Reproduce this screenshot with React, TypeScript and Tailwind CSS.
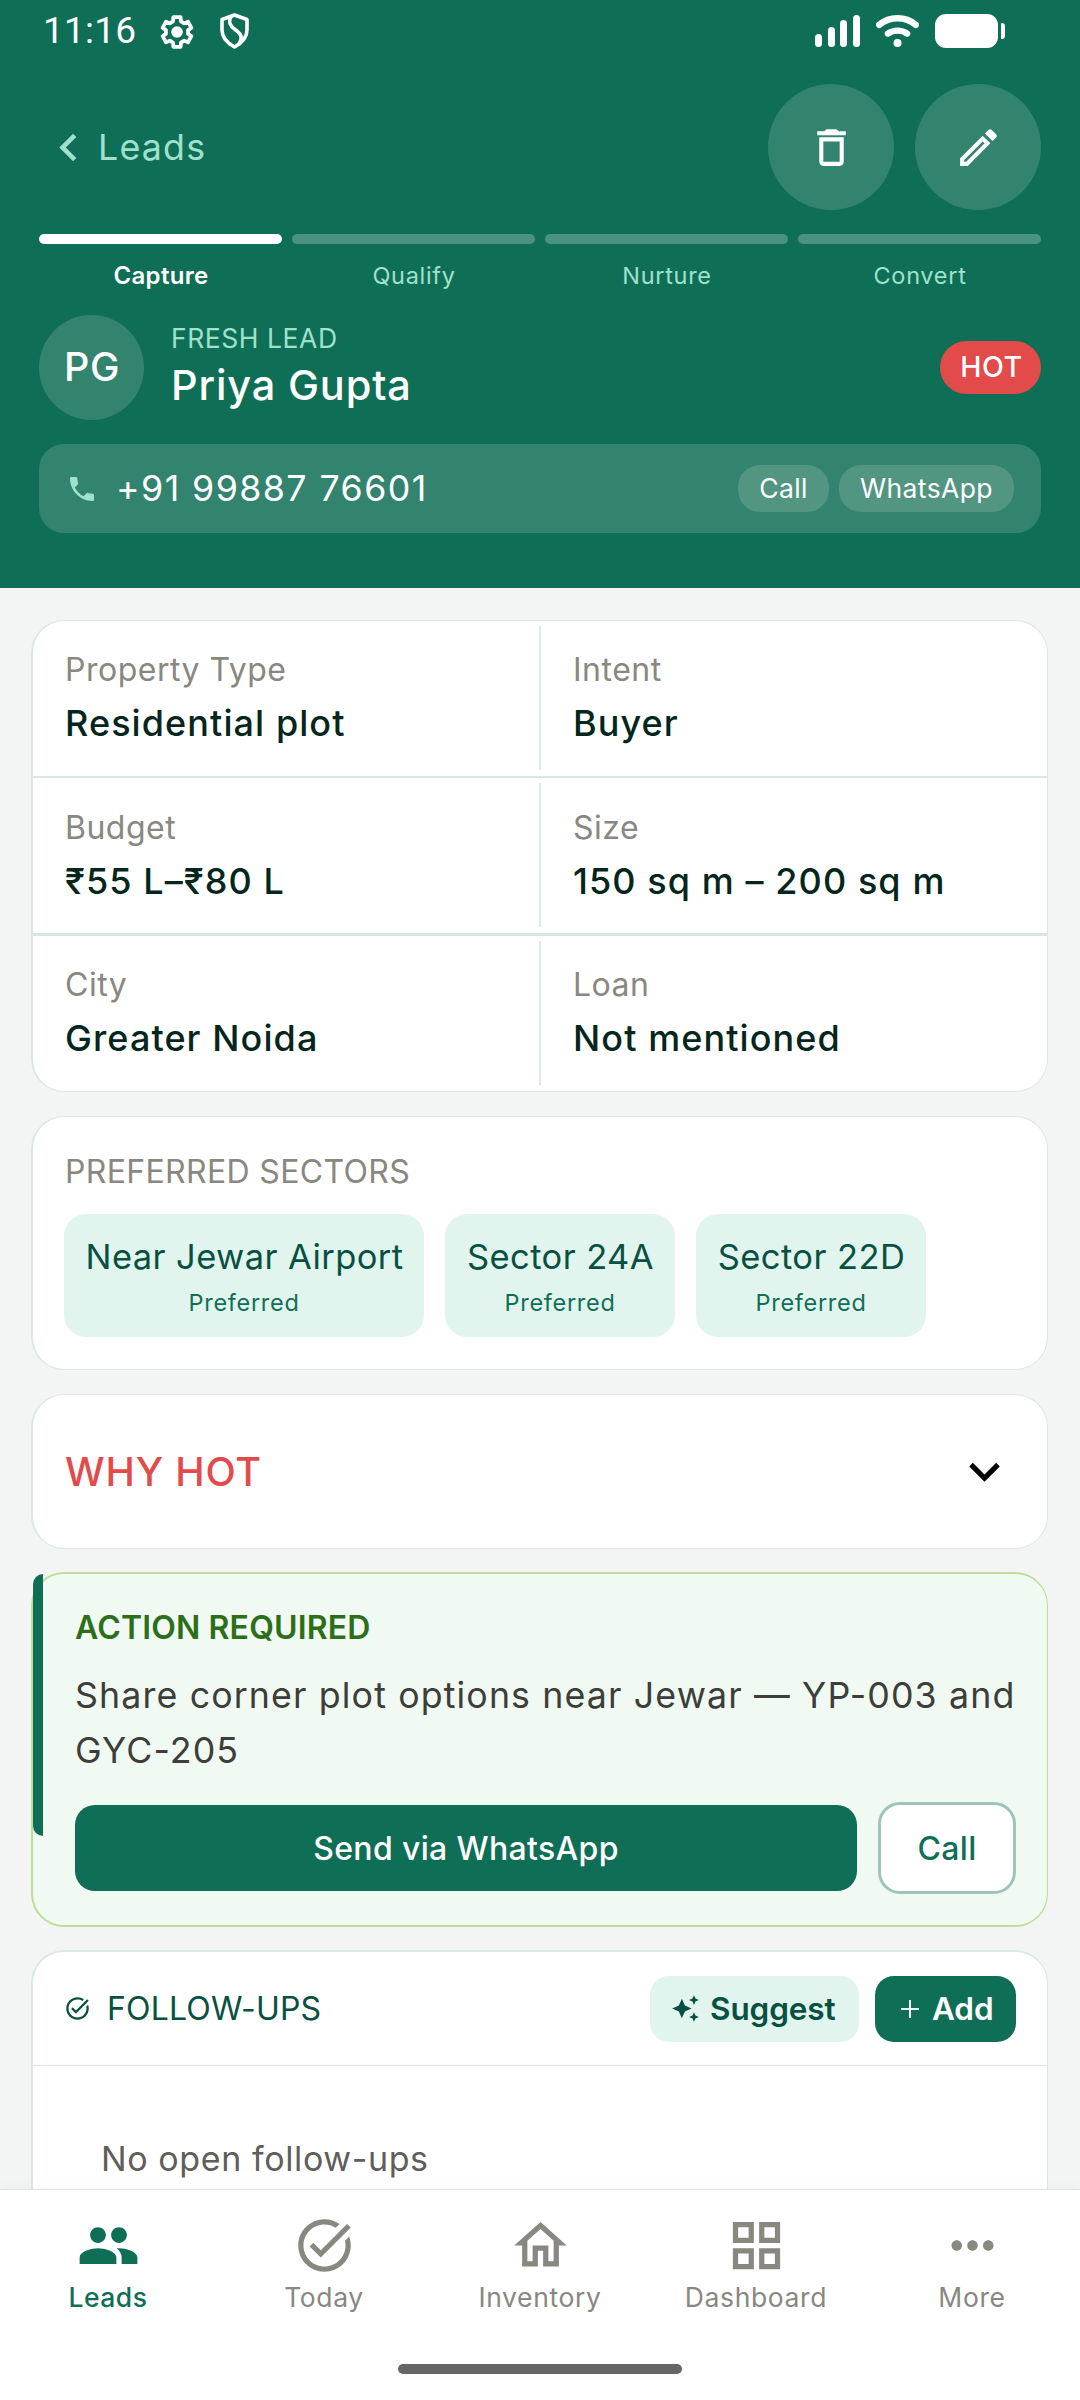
import type { ReactNode } from "react";
import {
  MdAutoAwesome,
  MdChevronLeft,
  MdDeleteOutline,
  MdExpandMore,
  MdMoreHoriz,
  MdOutlineEdit,
  MdOutlineGridView,
  MdOutlineHome,
  MdPeople,
  MdPhone,
  MdTaskAlt,
} from "react-icons/md";

function StatusBar() {
  return (
    <div className="flex h-[62px] items-center justify-between pl-[43px] pr-[75px] text-white">
      <div className="flex items-center">
        <span className="-mt-[1px] w-[117px] font-['Roboto'] text-[37px] leading-none tracking-[0.2px]">11:16</span>
        <svg className="mt-[1px] h-[34px] w-[34px]" viewBox="-17 -17 34 34" fill="none">
          <path
            d="M-3.6-14.8 3.6-14.8 4-10.6 7.2-8.6 11-10.4 14.4-4.2 11.1-1.9 11.1 1.9 14.4 4.2 11 10.4 7.2 8.6 4 10.6 3.6 14.8-3.6 14.8-4 10.6-7.2 8.6-11 10.4-14.4 4.2-11.1 1.9-11.1-1.9-14.4-4.2-11-10.4-7.2-8.6-4-10.6Z"
            stroke="currentColor"
            strokeWidth="3.8"
            strokeLinejoin="round"
          />
          <circle r="5.8" fill="currentColor" />
        </svg>
        <svg className="ml-[26px] h-[36px] w-[29px]" viewBox="0 0 29 36" fill="none" stroke="currentColor" strokeWidth="3.600" strokeLinejoin="round">
          <path d="M14.5 2 27 6.5V17C27 25 21 30.500 14.500 34 8 30.500 2 25 2 17V6.500Z" />
          <path d="M11 3.500C7.500 10 11 13.500 15 16.500 21 21 23.500 24 18.500 31.500" />
        </svg>
      </div>
      <div className="flex items-center">
        <div className="flex h-[32px] w-[45px] items-end justify-between">
          <i className="h-[13px] w-[7px] rounded-full bg-white" />
          <i className="h-[20px] w-[7px] rounded-full bg-white" />
          <i className="h-[27px] w-[7px] rounded-full bg-white" />
          <i className="h-[32px] w-[7px] rounded-full bg-white" />
        </div>
        <svg className="ml-[16px] h-[32px] w-[43px]" viewBox="0 0 43 32" fill="none" stroke="currentColor" strokeLinecap="round">
          <path d="M3.300 9.800C13.500 1.200 29.500 1.200 39.700 9.800" strokeWidth="6.500" />
          <path d="M11.800 18.600C17.500 14.600 25.500 14.600 31.200 18.600" strokeWidth="6.200" />
          <circle cx="21.500" cy="28" r="4" fill="currentColor" stroke="none" />
        </svg>
        <div className="ml-[16px] h-[34px] w-[63px] rounded-[11px] bg-white" />
        <div className="ml-[3px] h-[16px] w-[4px] rounded-r-[4px] rounded-l-[1px] bg-white" />
      </div>
    </div>
  );
}

const stages = ["Capture", "Qualify", "Nurture", "Convert"];

function Header() {
  return (
    <header className="h-[588px] bg-[#0f6e56]">
      <StatusBar />
      <div className="mt-[22px] flex h-[126px] items-center pl-[41px] pr-[39px]">
        <MdChevronLeft className="size-[55px] text-[#9fe1cb]" />
        <span className="ml-[2px] mt-[2px] flex-1 text-[35.75px] leading-none tracking-[1.2px] text-[#9fe1cb]">Leads</span>
        <div className="flex gap-[21px] text-white">
          <div className="flex size-[126px] items-center justify-center rounded-full bg-[#33846f]">
            <MdDeleteOutline className="size-[49px]" />
          </div>
          <div className="flex size-[126px] items-center justify-center rounded-full bg-[#33846f]">
            <MdOutlineEdit className="size-[49px]" />
          </div>
        </div>
      </div>
      <div className="mx-[39px] mt-[24px] grid grid-cols-4 gap-[10px]">
        {stages.map((s, i) => (
          <div key={s} className="text-center">
            <div className={i === 0 ? "h-[10px] rounded-full bg-white" : "h-[10px] rounded-full bg-[#4b9280]"} />
            <div
              className={
                i === 0
                  ? "mt-[17px] pl-[1px] text-[24px] font-semibold leading-[30px] tracking-[0.3px] text-white"
                  : "mt-[17px] pl-[1px] text-[23.5px] leading-[30px] tracking-[0.7px] text-[#9fe1cb]"
              }
            >
              {s}
            </div>
          </div>
        ))}
      </div>
      <div className="mx-[39px] mt-[24px] flex h-[105px] items-center">
        <div className="flex size-[105px] items-center justify-center rounded-full bg-[#33846f] pl-[1px] text-[39.5px] font-medium tracking-[0.5px] text-white">
          PG
        </div>
        <div className="-mt-[3px] ml-[27px] flex-1">
          <div className="text-[26.5px] leading-[37px] tracking-[0.55px] text-[#9fe1cb]">FRESH LEAD</div>
          <div className="text-[41.5px] font-medium leading-[56px] tracking-[0.85px] text-white">Priya Gupta</div>
        </div>
        <div className="flex h-[53px] w-[101px] items-center justify-center rounded-full bg-[#e24b4a] pl-[2px] text-[28.5px] font-medium tracking-[0.6px] text-white">
          HOT
        </div>
      </div>
      <div className="mx-[39px] mt-[24px] flex h-[89px] items-center rounded-[25px] bg-[#33846f] px-[27px]">
        <MdPhone className="size-[32px] text-[#9fe1cb]" />
        <span className="ml-[18px] flex-1 text-[35.75px] leading-none tracking-[1.42px] text-white">+91 99887 76601</span>
        <div className="flex gap-[10px] text-[26.5px] tracking-[0.4px] text-white">
          <div className="flex h-[47px] w-[91px] items-center justify-center rounded-[22px] bg-[#529682] pt-[1px]">Call</div>
          <div className="flex h-[47px] w-[175px] items-center justify-center rounded-[22px] bg-[#529682] pt-[1px]">WhatsApp</div>
        </div>
      </div>
    </header>
  );
}

function Field({ label, value, className }: { label: string; value: string; className: string }) {
  return (
    <div className={className}>
      <div className="text-[32px] leading-[44px] tracking-[0.5px] text-[#888780]">{label}</div>
      <div className="text-[36px] font-medium leading-[63px] tracking-[1.08px] text-[#04261d]">{value}</div>
    </div>
  );
}

function FieldRow({ children, className }: { children: [ReactNode, ReactNode]; className: string }) {
  return (
    <div className={className}>
      {children[0]}
      <div className="mb-[6px] mt-[5px] w-[2px] bg-[#dfeae6]" />
      {children[1]}
    </div>
  );
}

function Details() {
  return (
    <section className="h-[472px] rounded-[33px] border border-l-2 border-[#dbe7e3] bg-white">
      <FieldRow className="flex h-[155px]">
        <Field className="flex-1 pl-[32px] pt-[27px]" label="Property Type" value="Residential plot" />
        <Field className="flex-1 pl-[32px] pt-[27px]" label="Intent" value="Buyer" />
      </FieldRow>
      <FieldRow className="flex h-[157px] border-t-2 border-[#dbe7e3]">
        <Field className="flex-1 pl-[32px] pt-[28px]" label="Budget" value="₹55 L–₹80 L" />
        <Field className="flex-1 pl-[32px] pt-[28px]" label="Size" value="150 sq m – 200 sq m" />
      </FieldRow>
      <FieldRow className="flex h-[158px] border-t-3 border-[#dbe7e3]">
        <Field className="flex-1 pl-[32px] pt-[27px]" label="City" value="Greater Noida" />
        <Field className="flex-1 pl-[32px] pt-[27px]" label="Loan" value="Not mentioned" />
      </FieldRow>
    </section>
  );
}

function Sector({ name, className }: { name: string; className: string }) {
  return (
    <div className={className}>
      <div className="pl-[1px] text-[34.5px] leading-[46px] tracking-[0.42px] text-[#085041]">{name}</div>
      <div className="text-[23.5px] leading-[46px] tracking-[0.7px] text-[#0f6e56]">Preferred</div>
    </div>
  );
}

function Sectors() {
  return (
    <section className="mt-[24px] h-[254px] rounded-[33px] border border-l-2 border-[#dbe7e3] bg-white pl-[31px] pt-[32px]">
      <div className="pl-[1px] text-[32px] leading-[45px] tracking-[0.34px] text-[#888780]">PREFERRED SECTORS</div>
      <div className="mt-[20px] flex gap-[21px] text-center">
        <Sector name="Near Jewar Airport" className="h-[123px] w-[360px] rounded-[22px] bg-[#e1f5ee] pt-[20px]" />
        <Sector name="Sector 24A" className="h-[123px] w-[230px] rounded-[22px] bg-[#e1f5ee] pt-[20px]" />
        <Sector name="Sector 22D" className="h-[123px] w-[230px] rounded-[22px] bg-[#e1f5ee] pt-[20px]" />
      </div>
    </section>
  );
}

function WhyHot() {
  return (
    <section className="mt-[24px] flex h-[155px] items-center justify-between rounded-[33px] border border-l-2 border-[#dbe7e3] bg-white pl-[32px] pr-[32px]">
      <span className="mt-[2px] text-[39.5px] font-medium tracking-[0.8px] text-[#e24b4a]">WHY HOT</span>
      <MdExpandMore className="size-[61px] text-black" />
    </section>
  );
}

function Action() {
  return (
    <section className="relative mt-[23px] h-[355px] rounded-[33px] border-2 border-r border-[#c0dd97] bg-[#f0faf2] pl-[42px] pr-[31px] pt-[32px]">
      <div className="absolute left-0 top-0 h-[262px] w-[10px] rounded-l-[10px] bg-[#0f6e56]" />
      <div className="text-[32px] font-semibold leading-[44px] tracking-[0.15px] text-[#2d6e18]">ACTION REQUIRED</div>
      <div className="mt-[18px] whitespace-nowrap text-[35.75px] leading-[55px] tracking-[1.12px] text-[#3d3d3a]">
        Share corner plot options near Jewar — YP-003 and
        <br />
        GYC-205
      </div>
      <div className="mt-[24px] flex items-center gap-[21px] text-[32px] font-medium tracking-[0.35px]">
        <div className="flex h-[86px] flex-1 items-center justify-center rounded-[20px] bg-[#0f6e56] pt-[1px] text-white">Send via WhatsApp</div>
        <div className="flex h-[92px] w-[138px] items-center justify-center rounded-[22px] border-3 border-[#9fc5bb] bg-white pt-[1px] text-[#0f6e56]">
          Call
        </div>
      </div>
    </section>
  );
}

function FollowUps() {
  return (
    <section className="mt-[23px] h-[400px] rounded-[33px] border border-l-2 border-t-2 border-[#dbe7e3] bg-white">
      <div className="flex h-[114px] items-center border-b border-[#dbe7e3] pl-[31px] pr-[31px]">
        <MdTaskAlt className="size-[27px] text-[#085041]" />
        <span className="ml-[16px] mt-[1px] flex-1 text-[32px] tracking-[0.18px] text-[#085041]">FOLLOW-UPS</span>
        <div className="flex h-[66px] w-[209px] items-center rounded-[19px] bg-[#e1f5ee] pl-[21px] text-[31.5px] font-semibold tracking-[-0.1px] text-[#085041]">
          <MdAutoAwesome className="mr-[10px] size-[29px]" />
          Suggest
        </div>
        <div className="ml-[16px] flex h-[66px] w-[141px] items-center rounded-[19px] bg-[#0f6e56] pl-[26px] text-[31.5px] font-semibold tracking-[-0.1px] text-white">
          <svg className="mr-[13px] size-[18px]" viewBox="0 0 18 18" stroke="currentColor" strokeWidth="2">
            <path d="M9 0V18M0 9H18" />
          </svg>
          Add
        </div>
      </div>
      <div className="mt-[70px] pl-[68px] text-[34px] leading-[46px] tracking-[0.6px] text-[#5f5e5a]">No open follow-ups</div>
    </section>
  );
}

const tabs = [
  { label: "Leads", Icon: MdPeople },
  { label: "Today", Icon: MdTaskAlt },
  { label: "Inventory", Icon: MdOutlineHome },
  { label: "Dashboard", Icon: MdOutlineGridView },
  { label: "More", Icon: MdMoreHoriz },
];

function BottomNav() {
  return (
    <nav className="relative h-[211px] border-t border-[#dbe5e1] bg-white shadow-[0_-2px_12px_rgba(0,0,0,0.03)]">
      <div className="grid grid-cols-5 pt-[24px]">
        {tabs.map(({ label, Icon }, i) => (
          <div key={label} className={i === 0 ? "flex flex-col items-center text-[#0f6e56]" : "flex flex-col items-center text-[#888780]"}>
            <Icon className="size-[63px]" />
            <span
              className={
                i === 0
                  ? "mt-[2px] text-[26.5px] font-medium leading-[36px] tracking-[0.5px]"
                  : "mt-[2px] text-[26.5px] leading-[36px] tracking-[0.62px]"
              }
            >
              {label}
            </span>
          </div>
        ))}
      </div>
      <div className="mx-auto mt-[49px] h-[10px] w-[284px] rounded-full bg-[#666666]" />
    </nav>
  );
}

export default function App() {
  return (
    <div className="flex h-[2400px] w-[1080px] flex-col overflow-hidden bg-[#f3f5f4] font-['Inter',sans-serif]">
      <Header />
      <main className="h-[1601px] overflow-hidden pl-[31px] pr-[32px] pt-[32px]">
        <Details />
        <Sectors />
        <WhyHot />
        <Action />
        <FollowUps />
      </main>
      <BottomNav />
    </div>
  );
}
